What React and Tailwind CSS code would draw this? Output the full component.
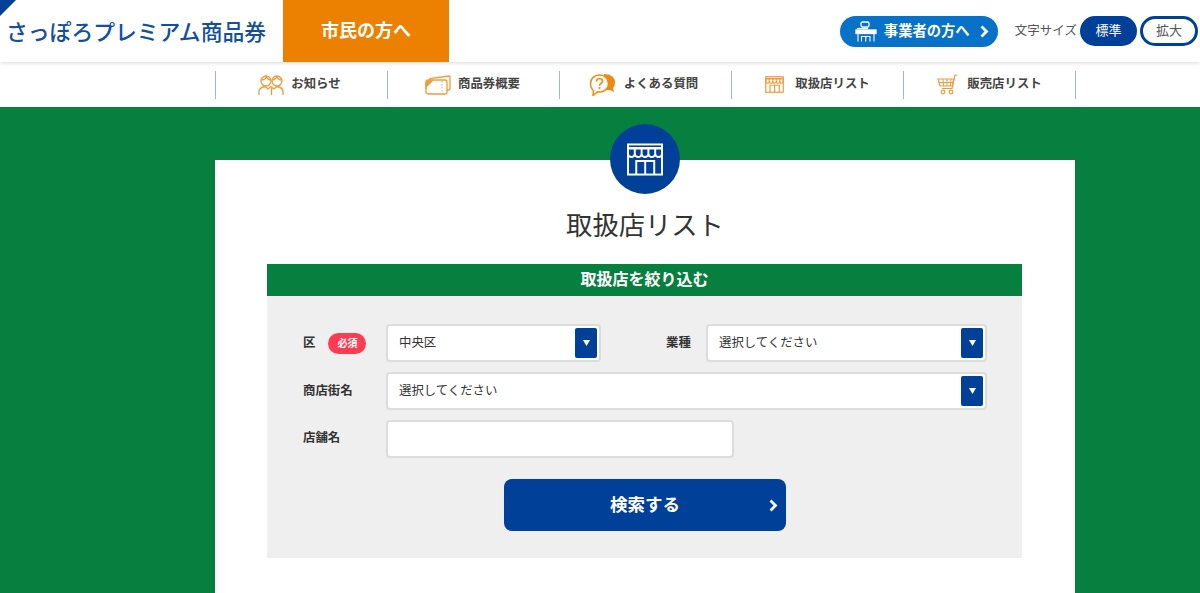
const font = { fontFamily: '"Noto Sans CJK JP", "Noto Sans", sans-serif' };

function PeopleIcon() {
  return (
    <svg width="27" height="22" viewBox="0 0 27 22" fill="none" stroke="#f39a3a" strokeWidth="1.300">
      <circle cx="8" cy="7" r="5" />
      <circle cx="19" cy="7" r="5" />
      <path d="M3.500 6c2 0 4-1 5-3 1 2 2 3 4 3M14.500 6c2 0 3-1 4.500-3 1 2 3 3 5 3" />
      <path d="M1 21v-3c0-3 3-5 6-5.500l3 2.500 3-2.500 3 2.500 3-2.500c3 .5 6 2.500 6 5.500v3M13.500 14v7" />
    </svg>
  );
}
function TicketIcon() {
  return (
    <svg width="26" height="20" viewBox="0 0 26 20" fill="none" stroke="#f39a3a" strokeWidth="1.300">
      <path d="M5 5V3.500L24 1c.8 0 1 .5 1 1v12c0 .8-.4 1-1 1h-2" />
      <rect x="1" y="5" width="21" height="14" rx="2" />
      <path d="M1 14V12l6-6H3l-2 2z" fill="#f39a3a" />
      <path d="M17 6v12" strokeDasharray="1.500 1.500" strokeWidth="1" />
    </svg>
  );
}
function QuestionIcon() {
  return (
    <svg width="27" height="23" viewBox="0 0 27 23">
      <path d="M15 1c6 0 11 3 11 8 0 3-1 5-2 6l1 4-4-2c-2 0-4 0-5-1z" fill="#ee8a10" />
      <path d="M10.500 2c5 0 9 3.500 9 8.500s-4 8.500-9 8.500c-.8 0-1.500 0-2-.2L4 22.500l.5-5C2.500 16 1.500 13.500 1.500 10.500 1.500 5.500 5.500 2 10.500 2z" fill="#fff" stroke="#f08c14" strokeWidth="1.500" />
      <path d="M7.500 8.500c0-2 1.300-3 3-3s3 1 3 2.800c0 2.200-3 2.200-3 4.500" fill="none" stroke="#f08c14" strokeWidth="1.700" />
      <circle cx="10.500" cy="15" r="1.100" fill="#f08c14" />
    </svg>
  );
}
function ShopIcon({ color = "#f39a3a", h = 17, w = 19, sw = 2.4 }) {
  return (
    <svg width={w} height={h} viewBox="0 0 38 34" fill="none" stroke={color} strokeWidth={sw}>
      <rect x="1.500" y="1.500" width="35" height="31" />
      <path d="M1.500 5.500h35" strokeWidth={sw * 1.300} />
      <path d="M1.500 6v5a3.500 3.500 0 0 0 7 0V6v5a3.500 3.500 0 0 0 7 0V6v5a3.500 3.500 0 0 0 7 0V6v5a3.500 3.500 0 0 0 7 0V6v5a3.500 3.500 0 0 0 7 0V6" />
      <path d="M10 32.500v-14h18.500v14M19.200 18.500v14" />
    </svg>
  );
}
function CartIcon() {
  return (
    <svg width="21" height="21" viewBox="0 0 21 21" fill="none" stroke="#f39a3a" strokeWidth="1.200">
      <path d="M20.500 1h-2.500l-3 13.500H5" />
      <path d="M1 5h16l-1.700 7H3z" />
      <path d="M1.500 8.500h15M6 5l.7 7M10 5v7M14 5l-.7 7" strokeWidth="1" />
      <circle cx="6" cy="18" r="1.800" />
      <circle cx="14" cy="18" r="1.800" />
    </svg>
  );
}
function DeskIcon() {
  return (
    <svg width="22" height="21" viewBox="0 0 22 21" fill="none" stroke="#fff" strokeWidth="1.300">
      <rect x="6" y="1" width="8" height="5" rx="1.500" />
      <path d="M2 7.500h11" strokeWidth="1.200" />
      <rect x="1" y="9" width="20" height="3.500" fill="#fff" />
      <path d="M3 12.500V20.500M19 12.500V20.500M6.500 20.500v-5h8.500v5M10.800 15.500v5" strokeWidth="1.100" />
    </svg>
  );
}
function Chevron({ className = "" }) {
  return (
    <svg className={className} width="9" height="13" viewBox="0 0 9 13" fill="none" stroke="#fff" strokeWidth="2.800">
      <path d="M1.500 1.500l5 5-5 5" />
    </svg>
  );
}

const navItems = [
  { label: "お知らせ", icon: <PeopleIcon />, cls: "gap-[6px] pr-[4px]" },
  { label: "商品券概要", icon: <TicketIcon />, cls: "gap-[7px] pr-[2px]" },
  { label: "よくある質問", icon: <QuestionIcon />, cls: "gap-[8px] pr-[4px]" },
  { label: "取扱店リスト", icon: <ShopIcon />, cls: "gap-[11px]" },
  { label: "販売店リスト", icon: <CartIcon />, cls: "gap-[9px]" },
];

function Select({ value, className = "" }) {
  return (
    <div className={`flex h-[38px] items-center justify-between rounded-[4px] border-2 border-[#dcdcdc] bg-white pl-[11px] pr-[2px] ${className}`}>
      <span className="pb-[2px] text-[12.400px] text-[#333]">{value}</span>
      <span className="flex h-[30px] w-[22px] items-center justify-center rounded-[2px] bg-[#004098]">
        <svg width="7" height="6" viewBox="0 0 7 6"><path d="M0 0h7L3.500 6z" fill="#fff" /></svg>
      </span>
    </div>
  );
}

export default function App() {
  return (
    <div className="h-[593px] w-[1200px] overflow-hidden bg-[#07803f]" style={font}>
      <header className="relative z-10 flex h-[62px] items-center bg-white shadow-[0_1px_4px_rgba(0,0,0,0.15)]">
        <div className="relative flex h-full w-[283px] items-center pl-[6px]">
          <span className="absolute left-0 top-0 h-0 w-0 border-r-[16px] border-t-[16px] border-r-transparent border-t-[#004098]" />
          <span className="text-[21.800px] font-medium leading-none text-[#134fa0]">さっぽろプレミアム商品券</span>
        </div>
        <div className="flex h-full w-[166px] items-center justify-center bg-[#ec8000] pb-[4px] text-[18px] font-bold text-white">市民の方へ</div>
        <div className="ml-auto flex items-center pr-[2px]">
          <div className="flex h-[31px] w-[158px] items-center rounded-full bg-[#0871c8] pl-[15px] text-[14.300px] font-bold text-white">
            <DeskIcon />
            <span className="ml-[7px] pb-[2px]">事業者の方へ</span>
            <Chevron className="ml-[10px]" />
          </div>
          <span className="ml-[17px] pb-[1px] text-[12.500px] text-[#555]">文字サイズ</span>
          <div className="ml-[3px] flex h-[30px] w-[57px] items-center justify-center rounded-full bg-[#004098] pb-[2px] text-[13px] text-white">標準</div>
          <div className="ml-[3px] flex h-[30px] w-[58px] items-center justify-center rounded-full border-[3px] border-[#004098] bg-white pb-[2px] text-[13px] text-[#555]">拡大</div>
        </div>
      </header>

      <nav className="flex h-[45px] items-center bg-white pl-[215px]">
        <div className="flex w-[861px] border-r border-[#9fb6d8]">
          {navItems.map((item) => (
            <div key={item.label} className={`flex h-[28px] w-[172px] items-center justify-center border-l border-[#9fb6d8] ${item.cls}`}>
              {item.icon}
              <span className="pb-[2px] text-[12.400px] font-bold text-[#444]">{item.label}</span>
            </div>
          ))}
        </div>
      </nav>

      <main className="ml-[215px] mt-[53px] w-[860px] bg-white pb-[60px] pt-[44px]">
        <div className="relative">
          <div className="absolute left-1/2 top-[-80px] flex h-[70px] w-[70px] -translate-x-1/2 items-center justify-center rounded-full bg-[#004098]">
            <ShopIcon color="#fff" h={33} w={38} sw={2} />
          </div>
          <h1 className="pb-[1px] text-center text-[26.300px] font-normal leading-[39px] text-[#333]">取扱店リスト</h1>
        </div>

        <section className="ml-[52px] mr-[53px] mt-[20px]">
          <h2 className="flex h-[32px] items-center justify-center bg-[#07803f] pb-[4px] text-[16px] font-bold text-white">取扱店を絞り込む</h2>
          <div className="flex flex-col gap-[10px] bg-[#efefef] pb-[27px] pl-[36px] pr-[35px] pt-[28px]">
            <div className="flex items-center">
              <div className="flex w-[83px] items-center">
                <span className="pb-[2px] text-[12.400px] font-bold text-[#333]">区</span>
                <span className="ml-[13px] flex h-[21px] w-[38px] items-center justify-center rounded-full bg-[#ff3b53] pb-[1px] text-[10px] font-bold text-white">必須</span>
              </div>
              <Select value="中央区" className="w-[215px]" />
              <span className="ml-[65px] w-[40px] pb-[2px] text-[12.400px] font-bold text-[#333]">業種</span>
              <Select value="選択してください" className="flex-1" />
            </div>
            <div className="flex items-center">
              <span className="w-[83px] pb-[2px] text-[12.400px] font-bold text-[#333]">商店街名</span>
              <Select value="選択してください" className="flex-1" />
            </div>
            <div className="flex items-center">
              <span className="w-[83px] pb-[3px] text-[12.400px] font-bold text-[#333]">店舗名</span>
              <div className="h-[38px] w-[348px] rounded-[4px] border-2 border-[#dcdcdc] bg-white" />
            </div>
            <div className="relative ml-[201px] mt-[11px] flex h-[52px] w-[282px] items-center justify-center rounded-[8px] bg-[#004098] pb-[2px] text-[17.500px] font-bold text-white">
              検索する
              <Chevron className="absolute right-[8px] top-[20px]" />
            </div>
          </div>
        </section>
      </main>
    </div>
  );
}
